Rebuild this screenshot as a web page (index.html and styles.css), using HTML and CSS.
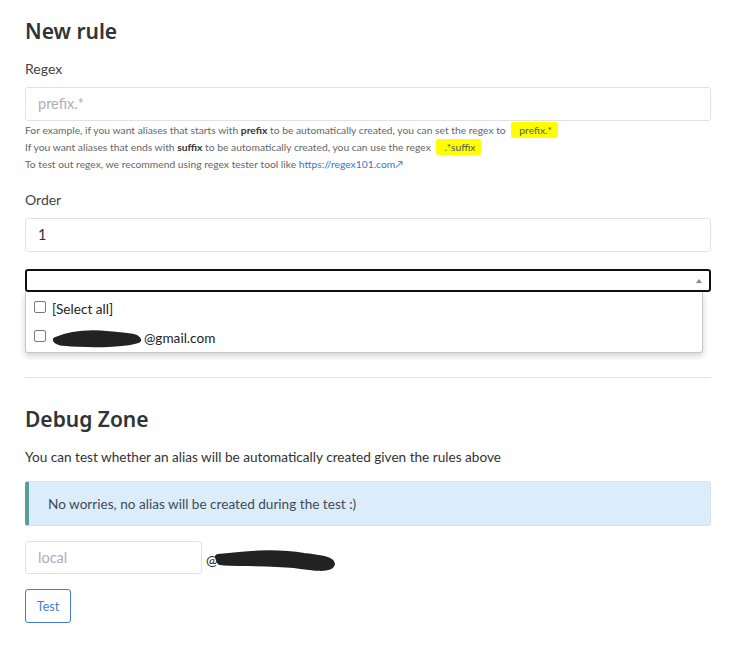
FILE: index.html
```html
<!DOCTYPE html>
<html>
<head>
<meta charset="utf-8">
<link rel="stylesheet" href="styles.css">
</head>
<body>
<div class="page">
  <h2 class="title">New rule</h2>

  <div class="field">
    <label class="label">Regex</label>
    <div class="input placeholder">prefix.*</div>
    <div class="help">
      <div>For example, if you want aliases that starts with <b>prefix</b> to be automatically created, you can set the regex to <code class="hl">prefix.*</code></div>
      <div>If you want aliases that ends with <b>suffix</b> to be automatically created, you can use the regex <code class="hl">.*suffix</code></div>
      <div>To test out regex, we recommend using regex tester tool like <a class="link">https://regex101.com&#8599;</a></div>
    </div>
  </div>

  <div class="field">
    <label class="label">Order</label>
    <div class="input">1</div>
  </div>

  <div class="select-wrap">
    <div class="select"><span class="arrow"></span></div>
    <div class="dropdown">
      <div class="option"><span class="cb"></span>[Select all]</div>
      <div class="option"><span class="cb"></span><span class="masked"><svg class="scribble" width="96" height="20" viewBox="0 0 96 20"><path d="M6 12 C 20 6, 40 4, 60 6 S 88 8, 90 12 C 80 16, 50 17, 30 16 S 8 15, 6 12 Z" fill="#222" stroke="#222" stroke-width="6" stroke-linejoin="round"/></svg></span>@gmail.com</div>
    </div>
  </div>

  <hr class="sep">

  <h2 class="title">Debug Zone</h2>
  <p class="text">You can test whether an alias will be automatically created given the rules above</p>

  <div class="alert">No worries, no alias will be created during the test :)</div>

  <div class="local-row">
    <div class="input small placeholder">local</div>
    <span class="at">@</span>
    <svg class="scribble2" width="124" height="26" viewBox="0 0 124 26"><path d="M4 9 C 30 6, 60 3, 90 8 C 108 10, 118 12, 118 16 C 116 22, 100 20, 80 17 C 50 14, 20 16, 6 14 Z" fill="#222" stroke="#222" stroke-width="6" stroke-linejoin="round"/></svg>
  </div>

  <button class="btn">Test</button>
</div>
</body>
</html>
```

FILE: styles.css
```css
* { box-sizing: border-box; }
body {
  margin: 0;
  background: #fff;
  font-family: Lato, "Noto Sans", sans-serif;
  color: #333;
}
.page {
  padding: 14px 30px 0 25px;
}
.title {
  margin: 0;
  font-family: "Noto Sans", sans-serif;
  font-size: 21px;
  font-weight: 600;
  color: #2f3437;
  line-height: 34px;
}
.field { margin-top: 11px; }
.label {
  display: block;
  font-size: 14px;
  color: #444;
  line-height: 20px;
  margin-bottom: 8px;
}
.input {
  height: 34px;
  border: 1px solid #dfe3e8;
  border-radius: 3px;
  padding: 0 12px;
  font-size: 14.5px;
  line-height: 32px;
  color: #333;
}
.placeholder { color: #aab0b6; }
.help {
  font-size: 10.3px;
  line-height: 17px;
  color: #666;
  margin-top: 1px;
}
.help b { color: #333; font-weight: 700; }
.hl {
  font-family: inherit;
  background: #ffff00;
  color: #555;
  padding: 2px 6px 2px 8px;
  border-radius: 2px;
  margin-left: 3px;
}
.link { color: #3c73c8; text-decoration: none; }
.field + .field { margin-top: 17px; }
.select-wrap {
  position: relative;
  margin-top: 17px;
}
.select {
  height: 23px;
  border: 2px solid #111;
  border-radius: 3px;
  position: relative;
}
.arrow {
  position: absolute;
  right: 7px;
  top: 8px;
  width: 0; height: 0;
  border-left: 3px solid transparent;
  border-right: 3px solid transparent;
  border-bottom: 4px solid #888;
}
.dropdown {
  position: absolute;
  left: 0;
  right: 8px;
  top: 23px;
  background: #fff;
  border: 1px solid #c8c8c8;
  border-top: none;
  border-radius: 0 0 3px 3px;
  box-shadow: 0 3px 6px rgba(0,0,0,0.18);
  padding: 2px 0 0;
  z-index: 2;
}
.option {
  display: flex;
  align-items: center;
  height: 29px;
  padding-left: 8px;
  font-size: 13.6px;
  color: #222;
}
.cb {
  width: 12px; height: 12px;
  border: 1px solid #777;
  border-radius: 2px;
  margin-right: 6px;
  margin-top: -4px;
}
.masked { display: inline-flex; width: 92px; }
.scribble { display: block; margin-left: -2px; }
.sep {
  border: none;
  border-top: 1px solid #e3e3e3;
  margin: 85px 0 0;
}
.sep + .title { margin-top: 24px; }
.text {
  margin: 11px 0 0;
  font-size: 13.6px;
  line-height: 20px;
  color: #333;
}
.alert {
  margin-top: 14px;
  height: 45px;
  background: #dbedfb;
  border: 1px solid #cfe5f6;
  border-left: 4px solid #5b9c9b;
  border-radius: 3px;
  padding-left: 19px;
  display: flex;
  align-items: center;
  font-size: 13.6px;
  color: #3f4a55;
}
.local-row {
  display: flex;
  align-items: center;
  margin-top: 15px;
}
.input.small { width: 177px; height: 33px; }
.at { font-size: 14px; color: #222; margin-left: 4px; margin-top: 4px; }
.scribble2 { margin-left: -4px; margin-top: 6px; }
.btn {
  display: block;
  margin-top: 15px;
  height: 34px;
  width: 46px;
  background: #fff;
  border: 1px solid #3f7ed8;
  border-radius: 3px;
  color: #3f7ed8;
  font-family: inherit;
  font-size: 12.5px;
  padding: 0;
}
```
